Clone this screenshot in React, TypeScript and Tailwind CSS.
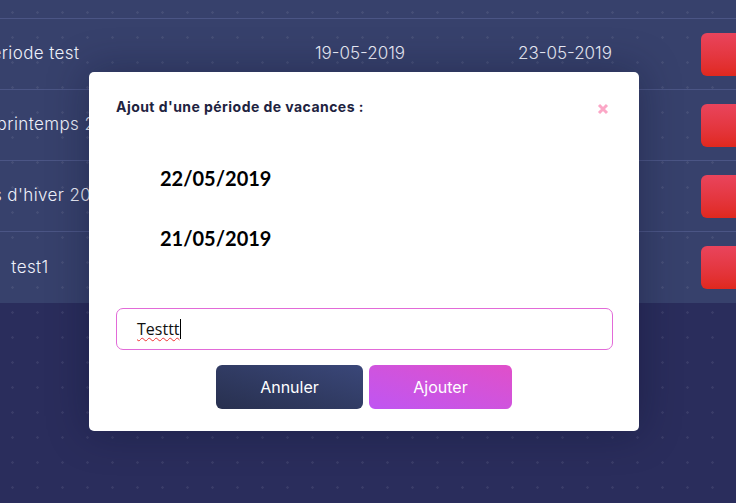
import React from 'react';

const rows = [
  { name: 'Période test', start: '19-05-2019', end: '23-05-2019' },
  { name: 'Vacances de printemps 2019-2020', start: '', end: '' },
  { name: "Vacances d'hiver 2019-20", start: '', end: '' },
  { name: 'test1', start: '', end: '' },
];

const dots =
  'bg-[radial-gradient(rgba(255,255,255,0.07)_1px,transparent_1.5px)] bg-[size:25px_25px]';

export default function App() {
  return (
    <div className={`relative w-[736px] h-[503px] overflow-hidden bg-[#2a2d5c] ${dots}`}>
      <div className={`bg-[#37416c] ${dots}`}>
        <div className="h-[19px] border-b border-[#4b5585]" />
        {rows.map((r) => (
          <div
            key={r.name}
            className="flex items-center h-[71px] border-b border-[#4b5585] last:border-b-0 text-[#eef0fa] text-[17px] font-light"
            style={{ fontFamily: 'Inter, "Noto Sans", sans-serif' }}
          >
            <div className="shrink-0 w-[300px] -ml-[120px] text-center whitespace-nowrap tracking-[0.4px]">{r.name}</div>
            <div className="shrink-0 ml-[120px] w-[120px] text-center">{r.start}</div>
            <div className="shrink-0 ml-[85px] w-[120px] text-center">{r.end}</div>
            <div className="shrink-0 ml-[76px] w-[60px] h-[43px] rounded-[6px] bg-linear-to-b from-[#e9445c] to-[#e0281d]" />
          </div>
        ))}
      </div>

      <div className="absolute left-[89px] top-[72px] w-[550px] h-[359px] rounded-[5px] bg-white shadow-[0_0_40px_rgba(10,12,40,0.35)] px-[27px] pt-[24px]">
        <div className="flex items-start justify-between">
          <h2
            className="text-[14px] font-bold text-[#1e2340] tracking-[0.45px]"
            style={{ fontFamily: 'Inter, "Noto Sans", sans-serif' }}
          >
            Ajout d'une période de vacances :
          </h2>
          <svg viewBox="0 0 12 12" className="w-[12px] h-[12px] mt-[7px] mr-[3px]">
            <path d="M2 2 L10 10 M10 2 L2 10" stroke="#fba7c6" strokeWidth="3" />
          </svg>
        </div>

        <div
          className="pl-[44px] mt-[51px] flex flex-col gap-[40px] text-[20px] font-bold text-black leading-none"
          style={{ fontFamily: 'Lato, sans-serif' }}
        >
          <div>22/05/2019</div>
          <div>21/05/2019</div>
        </div>

        <div
          className="mt-[60px] h-[42px] w-[497px] rounded-[7px] border border-[#e26ad8] flex items-center pl-[20px] text-[16px] text-[#111]"
          style={{ fontFamily: '"Open Sans", sans-serif' }}
        >
          <span className="underline decoration-wavy decoration-[#e33] decoration-1 underline-offset-2">Testtt</span>
          <span className="w-px h-[20px] bg-black" />
        </div>

        <div
          className="mt-[15px] flex justify-center gap-[6px] text-white text-[16px]"
          style={{ fontFamily: 'Inter, "Noto Sans", sans-serif' }}
        >
          <button className="w-[147px] h-[44px] rounded-[6px] bg-linear-to-tr from-[#28304f] to-[#3a4779]">
            Annuler
          </button>
          <button className="w-[143px] h-[44px] rounded-[6px] bg-linear-to-tr from-[#bf55f2] to-[#e04fc9]">
            Ajouter
          </button>
        </div>
      </div>
    </div>
  );
}
